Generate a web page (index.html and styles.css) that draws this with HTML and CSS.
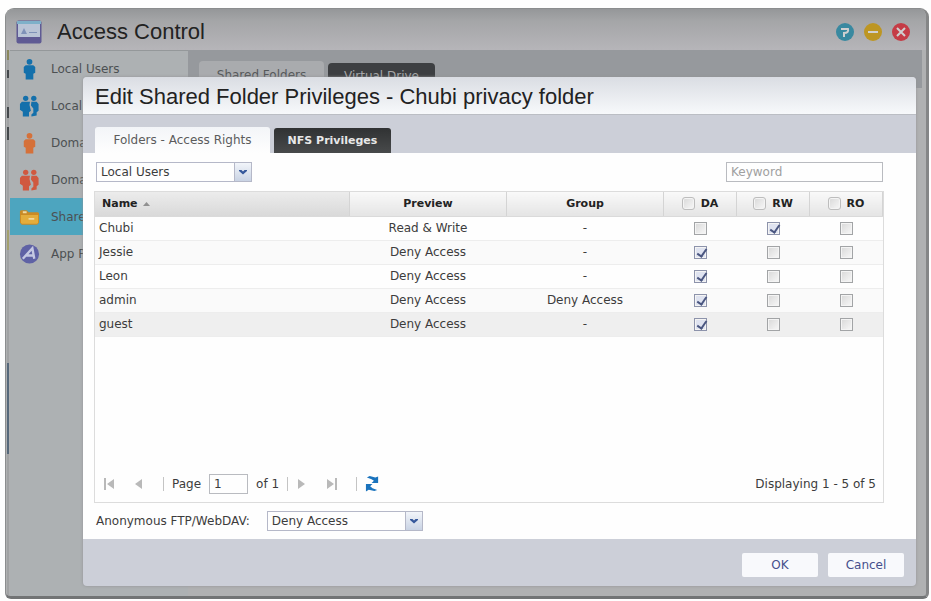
FILE: index.html
```
<!DOCTYPE html>
<html lang="en">
<head>
    <meta charset="UTF-8">
    <meta name="viewport" content="width=device-width, initial-scale=1.0">
    <title>Access Control</title>
    <link rel="stylesheet" href="styles.css">
</head>
<body>
    <!-- Shared icon shapes -->
    <svg class="sprite" aria-hidden="true">
        <symbol id="user" viewBox="0 0 22 22">
            <circle cx="11" cy="3.5" r="3"/>
            <path d="M7 7h8l2 2v6l-2 1v6H7v-6l-2-1V9z"/>
        </symbol>
        <symbol id="group" viewBox="0 0 22 22">
            <circle cx="7" cy="3" r="2.8"/>
            <circle cx="15.5" cy="3" r="2.8"/>
            <path d="M3 6.500h8.500L11 10l1.500 6-2 1.500V22H4v-5l-3-2V9z"/>
            <path d="M13 6.500h5.500l2 2.500v7l-2 1.500v3.500l-5.500 1v-2l2-2v-4.500l-2.500-3z"/>
        </symbol>
        <symbol id="chevron" viewBox="0 0 8 6">
            <path d="M0 1h2.500L4 2.500 5.500 1H8v1L4 5.500 0 2z"/>
        </symbol>
    </svg>

    <div class="window">
        <header class="titlebar">
            <svg class="app-icon" viewBox="0 0 26 24">
                <rect x=".5" y=".5" width="25" height="23" rx="2" fill="#5f5a94"/>
                <rect x="1" y="1" width="24" height="3" fill="#7eb0c9"/>
                <rect x="2" y="4" width="22" height="13" fill="#b9c4d6"/>
                <path d="M5 14l3-6 3 6zM13 12h8v1h-8z" fill="#7f92b8"/>
            </svg>
            <h1>Access Control</h1>
            <div class="window-buttons">
                <button class="help" aria-label="Help"><svg viewBox="0 0 18 18"><path d="M5 6h7q1 4-4 4v4"/></svg></button>
                <button class="minimize" aria-label="Minimize"><svg viewBox="0 0 18 18"><path d="M4 9h10"/></svg></button>
                <button class="close" aria-label="Close"><svg viewBox="0 0 18 18"><path d="M5 5l8 8M13 5l-8 8"/></svg></button>
            </div>
        </header>

        <div class="window-body">
            <nav class="sidebar">
                <a href="#"><svg class="blue"><use href="#user"/></svg>Local Users</a>
                <a href="#"><svg class="blue"><use href="#group"/></svg>Local Groups</a>
                <a href="#"><svg class="orange"><use href="#user"/></svg>Domain Users</a>
                <a href="#"><svg class="red"><use href="#group"/></svg>Domain Groups</a>
                <a href="#" class="selected">
                    <svg viewBox="0 0 22 22">
                        <path d="M1 5l1-1h6l2 2h10l1 1v10l-2 2H3l-2-2z" fill="#c98a25"/>
                        <path d="M2 9h18v8l-1 1H3l-1-1z" fill="#e3ad3c"/>
                        <path d="M4 6h4M10 13h6" stroke="#f0d9a2" stroke-width="2"/>
                    </svg>Shared Folders</a>
                <a href="#">
                    <svg viewBox="0 0 22 22">
                        <circle cx="11" cy="11" r="10" fill="#5f62a5"/>
                        <path d="M4 16L14 5l2 11M8 12.500h7" fill="none" stroke="#c4c8e2" stroke-width="2.500"/>
                    </svg>App Privileges</a>
            </nav>
            <div class="content">
                <div class="content-tabs">
                    <button>Shared Folders</button>
                    <button class="dark">Virtual Drive</button>
                </div>
            </div>
        </div>

        <!-- Edit dialog -->
        <div class="dialog" role="dialog" aria-labelledby="dialogTitle">
            <h2 id="dialogTitle">Edit Shared Folder Privileges - Chubi privacy folder</h2>
            <div class="tabs">
                <button class="active">Folders - Access Rights</button>
                <button>NFS Privileges</button>
            </div>

            <div class="dialog-body">
                <div class="toolbar">
                    <div class="select">
                        <select aria-label="User type"><option>Local Users</option></select>
                        <span><svg><use href="#chevron"/></svg></span>
                    </div>
                    <input class="keyword" type="text" placeholder="Keyword" aria-label="Keyword">
                </div>

                <div class="grid">
                    <table>
                        <thead>
                            <tr>
                                <th class="name">Name <svg viewBox="0 0 7 4"><path d="M0 4l3.500-4L7 4z"/></svg></th>
                                <th class="wide">Preview</th>
                                <th class="wide">Group</th>
                                <th><label><input type="checkbox">DA</label></th>
                                <th><label><input type="checkbox">RW</label></th>
                                <th><label><input type="checkbox">RO</label></th>
                            </tr>
                        </thead>
                        <tbody>
                            <tr>
                                <td>Chubi</td><td>Read &amp; Write</td><td>-</td>
                                <td><input type="checkbox" aria-label="Chubi DA"></td>
                                <td><input type="checkbox" aria-label="Chubi RW" checked></td>
                                <td><input type="checkbox" aria-label="Chubi RO"></td>
                            </tr>
                            <tr>
                                <td>Jessie</td><td>Deny Access</td><td>-</td>
                                <td><input type="checkbox" aria-label="Jessie DA" checked></td>
                                <td><input type="checkbox" aria-label="Jessie RW"></td>
                                <td><input type="checkbox" aria-label="Jessie RO"></td>
                            </tr>
                            <tr>
                                <td>Leon</td><td>Deny Access</td><td>-</td>
                                <td><input type="checkbox" aria-label="Leon DA" checked></td>
                                <td><input type="checkbox" aria-label="Leon RW"></td>
                                <td><input type="checkbox" aria-label="Leon RO"></td>
                            </tr>
                            <tr>
                                <td>admin</td><td>Deny Access</td><td>Deny Access</td>
                                <td><input type="checkbox" aria-label="admin DA" checked></td>
                                <td><input type="checkbox" aria-label="admin RW"></td>
                                <td><input type="checkbox" aria-label="admin RO"></td>
                            </tr>
                            <tr class="hover">
                                <td>guest</td><td>Deny Access</td><td>-</td>
                                <td><input type="checkbox" aria-label="guest DA" checked></td>
                                <td><input type="checkbox" aria-label="guest RW"></td>
                                <td><input type="checkbox" aria-label="guest RO"></td>
                            </tr>
                        </tbody>
                    </table>

                    <div class="pager">
                        <button aria-label="First page"><svg viewBox="0 0 12 12"><path d="M1 0h2v12H1zM11 1v10L4 6z"/></svg></button>
                        <button aria-label="Previous page"><svg viewBox="0 0 12 12"><path d="M9 1v10L2 6z"/></svg></button>
                        <i></i>
                        <label for="page">Page</label>
                        <input id="page" type="text" value="1">
                        <span>of 1</span>
                        <i></i>
                        <button aria-label="Next page"><svg viewBox="0 0 12 12"><path d="M2 1v10l7-5z"/></svg></button>
                        <button aria-label="Last page"><svg viewBox="0 0 12 12"><path d="M9 0h2v12H9zM1 1v10l7-5z"/></svg></button>
                        <i></i>
                        <button class="refresh" aria-label="Refresh"><svg viewBox="0 0 16 18"><path d="M2 2l3-1.500 6 1.500L14 1v7H7l2.500-2.500L7 4z"/><path d="M1 9h7L5.500 11.500 8 13.500l5 2-3 1-6-1.500L1 17z"/></svg></button>
                        <span class="status">Displaying 1 - 5 of 5</span>
                    </div>
                </div>

                <div class="anonymous">
                    <label for="anonymous">Anonymous FTP/WebDAV:</label>
                    <div class="select">
                        <select id="anonymous"><option>Deny Access</option></select>
                        <span><svg><use href="#chevron"/></svg></span>
                    </div>
                </div>
            </div>

            <footer>
                <button>OK</button>
                <button>Cancel</button>
            </footer>
        </div>
    </div>
</body>
</html>
```

FILE: styles.css
```
* {
    box-sizing: border-box;
}

body {
    display: flex;
    height: 100vh;
    margin: 0;
    padding: 8px 2px 2px 5px;
    background: #fefefe;
    font-family: 'DejaVu Sans', sans-serif;
    font-size: 12px;
    color: #3c3c3c;
}

button, input, select {
    margin: 0;
    font: inherit;
    color: inherit;
}

button {
    padding: 0;
    border: none;
    background: none;
}

.sprite {
    position: absolute;
    width: 0;
    height: 0;
}

/* Main window */
.window {
    position: relative;
    flex: 1;
    display: flex;
    flex-direction: column;
    border: 1px solid #8b8d8e;
    border-right: 3px solid #858687;
    border-bottom: 3px solid #727475;
    border-radius: 9px 9px 6px 6px;
    background: #b0b1b2;
    overflow: hidden;
}

.titlebar {
    display: flex;
    align-items: center;
    height: 41px;
    padding: 4px 16px 0 10px;
    background: linear-gradient(#959799, #a5a6a8 30%, #b6b5b9);
}

.app-icon {
    width: 26px;
    height: 24px;
    margin-right: 15px;
}

h1, h2 {
    margin: 0;
    font-family: 'Liberation Sans', sans-serif;
    font-size: 22px;
    font-weight: normal;
    color: #222;
}

.window-buttons {
    display: flex;
    gap: 10px;
    margin-left: auto;
}

    .window-buttons button {
        width: 18px;
        height: 18px;
        border-radius: 50%;
    }

    .window-buttons svg {
        display: block;
        fill: none;
        stroke: #d0d0d0;
        stroke-width: 2;
    }

.help {
    background: #3989a0;
}

.minimize {
    background: #bd9623;
}

.close {
    background: #c53c46;
}

.window-body {
    flex: 1;
    display: flex;
    padding: 0 4px 0 4px;
    background: linear-gradient(#8a875c 10px, #a0a2a3 10px 20px, #45494c 20px 28px, #a0a2a3 28px 57px, #45494c 57px 68px, #a0a2a3 68px 77px, #45494c 77px 90px, #a0a2a3 90px 180px, #a3a06c 180px 200px, #a0a2a3 200px 313px, #56687a 313px 404px, #a0a2a3 404px) 1px 0 / 2px 100% no-repeat;
}

.sidebar {
    width: 178px;
    background: #adb1b3;
    box-shadow: inset 0 1px #94989a;
}

    .sidebar a {
        display: flex;
        align-items: center;
        gap: 11px;
        height: 37px;
        padding-left: 9px;
        color: #4c5052;
        text-decoration: none;
    }

    .sidebar svg {
        width: 21px;
        height: 22px;
    }

    .sidebar .selected {
        background: #4da5bf;
    }

.blue {
    fill: #1470ab;
}

.orange {
    fill: #d5713a;
}

.red {
    fill: #d05940;
}

.content {
    flex: 1;
}

.content-tabs {
    display: flex;
    align-items: flex-end;
    gap: 4px;
    height: 38px;
    padding-left: 11px;
    background: #96999d;
}

    .content-tabs button {
        width: 125px;
        height: 27px;
        border-radius: 4px 4px 0 0;
        background: #a9abae;
        color: #55585a;
    }

    .content-tabs .dark {
        width: 107px;
        height: 25px;
        background: #3d3f42;
        color: #a5a7a9;
    }

/* Dialog over the window */
.dialog {
    position: absolute;
    top: 68px;
    right: 10px;
    bottom: 10px;
    left: 77px;
    display: flex;
    flex-direction: column;
    border-radius: 4px;
    background: #cccfd8;
    box-shadow: 0 0 3px #909294;
    overflow: hidden;
}

    .dialog h2 {
        height: 38px;
        padding-left: 12px;
        border-bottom: 1px solid #bbbec4;
        background: linear-gradient(#dadde3, #f7f9fb);
        line-height: 40px;
    }

.tabs {
    display: flex;
    align-items: flex-end;
    gap: 4px;
    height: 38px;
    padding-left: 12px;
}

    .tabs button {
        width: 117px;
        height: 25px;
        border-radius: 3px 3px 0 0;
        background: linear-gradient(#303233, #484a4b);
        color: #e8e8e8;
        font-size: 11px;
        font-weight: bold;
    }

    .tabs .active {
        width: 175px;
        height: 26px;
        background: linear-gradient(#f3f5f8, #fefefe);
        color: #5c5c5c;
        font-size: 12px;
        font-weight: normal;
    }

.dialog-body {
    flex: 1;
    display: flex;
    flex-direction: column;
    padding: 9px 32px 8px 11px;
    background: #fefefe;
}

.toolbar {
    display: flex;
    justify-content: space-between;
    margin-bottom: 9px;
    padding: 0 1px 0 2px;
}

.select {
    position: relative;
    width: 156px;
    height: 20px;
}

    .select select {
        width: 100%;
        height: 100%;
        padding: 0 20px 0 4px;
        border: 1px solid #b5b8c8;
        border-radius: 0;
        background: #fefefe;
        appearance: none;
    }

    .select span {
        position: absolute;
        top: 0;
        right: 0;
        display: flex;
        align-items: center;
        justify-content: center;
        width: 18px;
        height: 20px;
        border: 1px solid #b5b8c8;
        background: linear-gradient(#f2f5fa, #c9d3e4);
        pointer-events: none;
    }

    .select svg {
        width: 8px;
        height: 6px;
        fill: #35589b;
    }

.keyword {
    width: 157px;
    height: 20px;
    padding: 0 4px;
    border: 1px solid #b9bbc0;
    background: #fefefe;
}

    .keyword::placeholder {
        color: #a0a0a0;
    }

/* Privileges table */
.grid {
    flex: 1;
    display: flex;
    flex-direction: column;
    border: 1px solid #dcdcdc;
}

table {
    width: 100%;
    border-collapse: collapse;
    table-layout: fixed;
}

th, td {
    height: 24px;
    padding: 0;
    text-align: center;
}

th {
    width: 73px;
    border-right: 1px solid #d4d4d4;
    border-bottom: 1px solid #dadada;
    background: linear-gradient(#f9f9f9, #e4e4e4);
    font-size: 11px;
    color: #222;
}

    th.wide {
        width: 157px;
    }

    th.name {
        width: auto;
        padding-left: 7px;
        background: linear-gradient(#ececec, #d9d9d9);
        text-align: left;
    }

    th svg {
        width: 7px;
        height: 4px;
        margin-left: 2px;
        vertical-align: middle;
        fill: #909090;
    }

    th label {
        display: flex;
        align-items: center;
        justify-content: center;
        gap: 6px;
    }

td {
    border-bottom: 1px solid #ededed;
}

    td:first-child {
        padding-left: 4px;
        text-align: left;
    }

tbody tr:nth-child(even) {
    background: #fafafa;
}

tbody .hover {
    background: #efefef;
}

input[type="checkbox"] {
    display: inline-block;
    width: 13px;
    height: 13px;
    border: 1px solid #a2a4a6;
    background: linear-gradient(135deg, #d8d8d8, #f8f8f8);
    box-shadow: inset 0 0 0 1px #f4f4f4;
    vertical-align: middle;
    appearance: none;
}

th input[type="checkbox"] {
    border-color: #bdbdbd;
    border-radius: 3px;
}

/* Tick mark */
td input:checked::before {
    content: '';
    display: block;
    width: 4px;
    height: 8px;
    margin: 0 0 0 4px;
    border: solid #4a5680;
    border-width: 0 2px 2px 0;
    transform: rotate(35deg);
}

td input[type="checkbox"]:checked {
    border-color: #8d93ab;
    background: #dfe3f0;
}

/* Paging bar */
.pager {
    display: flex;
    align-items: center;
    height: 37px;
    margin-top: auto;
    padding: 0 7px 0 8px;
}

    .pager button {
        width: 12px;
        height: 18px;
        margin-right: 18px;
    }

    .pager svg {
        display: block;
        width: 12px;
        height: 18px;
        fill: #b9b9b9;
    }

    .pager i {
        width: 1px;
        height: 14px;
        margin-right: 8px;
        background: #c4c4c4;
    }

    .pager input {
        width: 39px;
        height: 20px;
        margin: 0 8px;
        padding: 0 4px;
        border: 1px solid #b9bbc0;
        background: #fefefe;
    }

    .pager span {
        margin-right: 8px;
    }

    .pager .refresh, .refresh svg {
        width: 15px;
    }

    .pager .refresh svg {
        width: 15px;
        fill: #1a73bd;
    }

    .pager .status {
        margin: 0 0 0 auto;
    }

.anonymous {
    display: flex;
    align-items: center;
    gap: 17px;
    margin-top: 8px;
    padding-left: 2px;
}

footer {
    display: flex;
    align-items: center;
    justify-content: flex-end;
    gap: 10px;
    height: 47px;
    padding: 4px 12px 0 0;
}

    footer button {
        width: 76px;
        height: 24px;
        border-radius: 2px;
        background: #f8f9fc;
        color: #46508c;
    }
```
